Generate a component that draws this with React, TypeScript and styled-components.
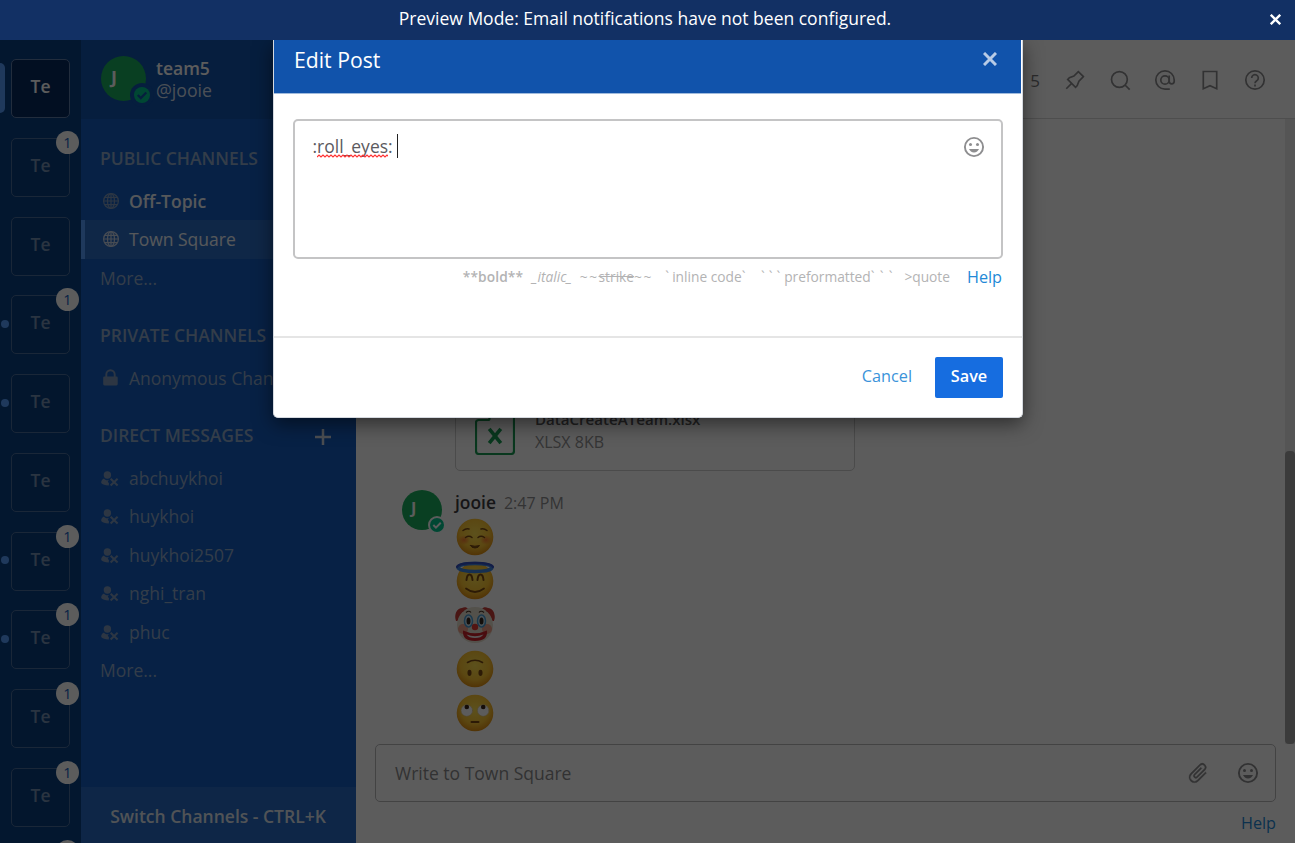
import React from "react";
import styled, { createGlobalStyle } from "styled-components";

const GlobalStyle = createGlobalStyle`
  * { box-sizing: border-box; }
  body { margin: 0; font-family: "Open Sans", sans-serif; font-size: 17.5px; overflow: hidden; }
`;

const Page = styled.div`
  position: relative;
  display: flex;
  flex-direction: column;
  width: 1295px;
  height: 843px;
  overflow: hidden;
  background: #fff;
`;
const Banner = styled.div`
  position: relative;
  z-index: 3;
  height: 40px;
  flex: none;
  display: flex;
  align-items: center;
  padding-bottom: 2px;
  background: #123064;
  color: #fff;
  font-size: 17.5px;
  line-height: 38px;
`;
const BannerText = styled.span`
  flex: 1;
  text-align: center;
  padding: 0 0 3px 35px;
`;
const BannerClose = styled.span`
  width: 40px;
  display: flex;
  justify-content: center;
`;
const Body = styled.div`
  flex: 1;
  min-height: 0;
  display: flex;
`;

/* Team rail */
const Rail = styled.nav`
  width: 81px;
  flex: none;
  background: #0b4283;
  padding-top: 19px;
  overflow: hidden;
`;
const TeamSlot = styled.div`
  position: relative;
  height: 78.75px;
  padding-left: 11px;
`;
const TeamTile = styled.div<{ $active?: boolean }>`
  width: 59px;
  height: 59px;
  border: 1px solid ${(p) => (p.$active ? "#5f7ca8" : "#4a6c9b")};
  border-radius: 5px;
  background: ${(p) => (p.$active ? "#082a60" : "#0a3e7d")};
  color: ${(p) => (p.$active ? "#fff" : "#7590b3")};
  font-weight: 600;
  line-height: 53px;
  text-align: center;
`;
const TeamBadge = styled.span`
  position: absolute;
  left: 56px;
  top: -7px;
  width: 23px;
  height: 23px;
  border-radius: 50%;
  background: #fff;
  color: #145dbf;
  font-size: 14.5px;
  line-height: 23px;
  text-align: center;
`;
const TeamMarker = styled.span<{ $active?: boolean }>`
  position: absolute;
  left: ${(p) => (p.$active ? "-5px" : "1px")};
  top: ${(p) => (p.$active ? "4px" : "24.5px")};
  width: ${(p) => (p.$active ? "10px" : "8px")};
  height: ${(p) => (p.$active ? "50px" : "8px")};
  border-radius: 5px;
  background: #579eff;
`;

/* Channel sidebar */
const Sidebar = styled.aside`
  width: 275px;
  flex: none;
  display: flex;
  flex-direction: column;
  background: #145dbf;
  color: #8eaed9;
`;
const TeamHeader = styled.div`
  height: 79px;
  flex: none;
  display: flex;
  align-items: flex-start;
  gap: 10px;
  padding: 16px 20px 0;
  background: #1153ab;
  line-height: 22px;
`;
const TeamName = styled.div`
  color: #fff;
  font-weight: 600;
  padding-top: 1px;
`;
const UserName = styled.div`
  color: #d0dded;
  font-size: 17.7px;
`;
const Avatar = styled.div<{ $size: number }>`
  position: relative;
  flex: none;
  width: ${(p) => p.$size}px;
  height: ${(p) => p.$size}px;
  border-radius: 50%;
  background: #1aaf5e;
  color: #fff;
  font-weight: 700;
  font-size: ${(p) => (p.$size > 42 ? 18 : 16)}px;
  line-height: ${(p) => p.$size - 3}px;
  padding-left: ${(p) => (p.$size > 42 ? 10 : 9)}px;
`;
const StatusBadge = styled.span<{ $ring: string; $size: number; $right: number; $bottom: number }>`
  position: absolute;
  right: ${(p) => p.$right}px;
  bottom: ${(p) => p.$bottom}px;
  width: ${(p) => p.$size}px;
  height: ${(p) => p.$size}px;
  border-radius: 50%;
  background: ${(p) => p.$ring};
  display: flex;
  align-items: center;
  justify-content: center;
`;
const Section = styled.div<{ $gap: number }>`
  display: flex;
  justify-content: space-between;
  align-items: center;
  height: 24px;
  flex: none;
  margin-top: ${(p) => p.$gap}px;
  margin-bottom: 12px;
  padding: 0 24px 0 19px;
  font-weight: 600;
  white-space: nowrap;
  color: #8fa8ca;
  svg { position: relative; top: 1px; }
`;
const Channel = styled.div<{ $active?: boolean; $strong?: boolean }>`
  height: 38.5px;
  flex: none;
  display: flex;
  align-items: center;
  gap: 10px;
  padding-left: ${(p) => (p.$active ? "15px" : "19px")};
  border-left: ${(p) => (p.$active ? "4px solid #579eff" : "0")};
  background: ${(p) => (p.$active ? "#2c6dc4" : "transparent")};
  color: ${(p) => (p.$active || p.$strong ? "#eef3fa" : "#8fa8ca")};
  font-weight: ${(p) => (p.$strong ? 600 : 400)};
  white-space: nowrap;
  overflow: hidden;
  svg { color: ${(p) => (p.$active ? "#c5d2e6" : "#7d97bb")}; flex: none; }
`;
const Switcher = styled.div`
  margin-top: auto;
  height: 56px;
  padding-right: 1px;
  background: #276ac4;
  color: #dfe6ef;
  font-weight: 600;
  line-height: 58px;
  text-align: center;
`;

/* Center */
const Center = styled.main`
  flex: 1;
  min-width: 0;
  display: flex;
  flex-direction: column;
  color: #3d3c40;
`;
const ChannelHeader = styled.header`
  height: 79px;
  flex: none;
  display: flex;
  justify-content: flex-end;
  align-items: center;
  gap: 21px;
  padding: 2px 28px 0 0;
  border-bottom: 1px solid #d8d8d8;
  color: #8b8b8d;
`;
const MemberCount = styled.span`
  font-size: 17px;
  margin-right: 2px;
  color: #77777a;
`;
const Scroller = styled.section`
  flex: 1;
  min-height: 0;
  display: flex;
`;
const Posts = styled.div`
  flex: 1;
  display: flex;
  flex-direction: column;
  justify-content: flex-end;
  padding: 0 0 9px 46px;
`;
const Track = styled.div`
  width: 10px;
  background: #ebebeb;
  display: flex;
  align-items: flex-end;
`;
const Thumb = styled.div`
  width: 10px;
  height: 293px;
  border-radius: 4px;
  background: #a5a5a5;
`;
const FileCard = styled.div`
  display: flex;
  align-items: center;
  gap: 20px;
  width: 400px;
  height: 84px;
  margin-left: 53px;
  padding: 2px 0 0 19px;
  border: 1px solid #cfcfcf;
  border-radius: 5px;
`;
const FileName = styled.div`
  font-size: 15.1px;
  font-weight: 600;
  line-height: 23px;
  color: #5d5c60;
`;
const FileMeta = styled.div`
  font-size: 16px;
  line-height: 22px;
  color: #929294;
`;
const Post = styled.article`
  display: flex;
  gap: 13px;
  margin-top: 19px;
`;
const PostMeta = styled.div`
  display: flex;
  gap: 8px;
  height: 25px;
  line-height: 25px;
  font-size: 17.4px;
`;
const Author = styled.b`
  font-weight: 600;
`;
const Time = styled.span`
  font-size: 16px;
  line-height: 26px;
  color: #8f8f91;
`;
const EmojiRow = styled.div`
  height: 44px;
  display: flex;
  align-items: center;
`;
const Composer = styled.div`
  height: 58px;
  flex: none;
  display: flex;
  align-items: center;
  margin: 0 19px;
  padding: 0 15px 0 19px;
  border: 1px solid #b9b9bb;
  border-radius: 5px;
  color: #8b8b8d;
`;
const Placeholder = styled.span`
  flex: 1;
`;
const ComposerIcons = styled.div`
  display: flex;
  gap: 26px;
  align-items: center;
`;
const ComposerFooter = styled.div`
  height: 41px;
  flex: none;
  padding-right: 19px;
  text-align: right;
  line-height: 42px;
  font-size: 16.2px;
  color: #2389d7;
`;

/* Modal */
const Backdrop = styled.div`
  position: absolute;
  inset: 0;
  z-index: 1;
  background: rgba(0, 0, 0, 0.64);
`;
const Modal = styled.div`
  position: absolute;
  z-index: 2;
  left: 273px;
  top: 40px;
  width: 750px;
  height: 377.5px;
  display: flex;
  flex-direction: column;
  background: #fff;
  border: 1px solid #d5d9df;
  border-top: 0;
  border-radius: 0 0 5px 5px;
  box-shadow: 0 6px 19px rgba(0, 0, 0, 0.5);
  overflow: hidden;
`;
const ModalHeader = styled.div`
  height: 54px;
  flex: none;
  display: flex;
  justify-content: space-between;
  margin-right: 1px;
  padding: 0 24px 0 20px;
  background: #1153ab;
  border-bottom: 1px solid #a0bbdd;
  color: #fff;
  font-size: 21.2px;
  line-height: 39px;
  svg { margin-top: 12px; }
`;
const ModalBody = styled.div`
  flex: 1;
  padding: 24.5px 19px 0;
`;
const EditBox = styled.div`
  height: 140px;
  display: flex;
  justify-content: space-between;
  align-items: flex-start;
  padding: 13.5px 15px 0 17.5px;
  border: 2px solid #c4c4c5;
  border-radius: 5px;
  line-height: 24px;
  color: #5b5a5e;
  > svg { color: #8e8e90; margin-top: 1px; }
`;
const Draft = styled.div`
  display: flex;
  font-size: 17.5px;
`;
const Misspelt = styled.span`
  position: relative;
`;
const Squiggle = styled.svg`
  position: absolute;
  left: 0;
  bottom: 0;
`;
const Caret = styled.i`
  width: 1px;
  height: 24px;
  margin-left: 4.5px;
  background: #222;
`;
const Hints = styled.div`
  display: flex;
  justify-content: flex-end;
  align-items: center;
  height: 36px;
  padding-right: 1px;
  font-size: 13.75px;
  color: #b3b3b4;
  white-space: pre;
`;
const Hint = styled.span<{ $gap: number }>`
  margin-right: ${(p) => p.$gap}px;
  b { font-weight: 600; letter-spacing: 0.1px; }
`;
const Marks = styled.span<{ $space: number }>`
  letter-spacing: ${(p) => p.$space}px;
`;
const HelpLink = styled.a`
  font-size: 16.2px;
  color: #2389d7;
`;
const ModalFooter = styled.div`
  height: 81px;
  flex: none;
  display: flex;
  justify-content: flex-end;
  align-items: flex-start;
  gap: 23px;
  padding: 19px 19px 0;
  border-top: 2px solid #e5e5e5;
  font-size: 16.25px;
  line-height: 39px;
`;
const Cancel = styled.span`
  color: #3a93da;
`;
const Save = styled.button`
  width: 68px;
  height: 41px;
  padding: 0 0 2px;
  border: 0;
  border-radius: 2px;
  background: #166de0;
  color: #fff;
  font: 600 16.25px/39px "Open Sans", sans-serif;
`;

const Icon = ({ size = 24, children }: { size?: number; children: React.ReactNode }) => (
  <svg width={size} height={size} viewBox="0 0 24 24" fill="none" stroke="currentColor" strokeWidth={1.7}>
    {children}
  </svg>
);
const Close = ({ size, color }: { size: number; color: string }) => (
  <svg width={size} height={size} viewBox="0 0 14 14" stroke={color} strokeWidth="3">
    <path d="M1 1l12 12M13 1L1 13" />
  </svg>
);
const Smiley = () => (
  <Icon>
    <circle cx="12" cy="12" r="9.1" strokeWidth="1.9" />
    <g fill="currentColor" stroke="none">
      <circle cx="8.5" cy="9.6" r="1.5" />
      <circle cx="15.5" cy="9.6" r="1.5" />
      <path d="M7 14h10c-.8 2-2.7 3.4-5 3.4S7.8 16 7 14z" />
    </g>
  </Icon>
);
const Globe = () => (
  <svg width="19" height="18" viewBox="-11 -9 19 18" fill="none" stroke="currentColor" strokeWidth="1.2">
    <circle r="7.4" />
    <ellipse rx="3.5" ry="7.4" />
    <path d="M0-7.4V7.4M-7.4 0H7.4M-6.5-3.7H6.5M-6.5 3.7H6.5" />
  </svg>
);
const Lock = () => (
  <svg width="19" height="18" viewBox="0 0 19 18" fill="currentColor">
    <rect x="3.2" y="7.4" width="14.5" height="9" rx="1.3" />
    <path d="M6.3 8V5.4a4.2 4.2 0 0 1 8.4 0V8" fill="none" stroke="currentColor" strokeWidth="1.9" />
  </svg>
);
const UserX = () => (
  <svg width="19" height="18" viewBox="0 0 19 18" fill="currentColor">
    <circle cx="7.4" cy="6" r="3.7" />
    <path d="M4 9.5C2 10.2 1.2 11.7 1.2 14 2.5 15.5 5 16.5 8.7 16.5L9 14.4 7.7 12.6 9 11C6.8 11.7 5 11.2 4 9.5z" />
    <path d="M10.6 9.8l7 6.6M17.6 9.8l-7 6.6" stroke="currentColor" strokeWidth="2" />
  </svg>
);
const StatusCheck = ({ size, tick }: { size: number; tick: string }) => (
  <svg width={size} height={size} viewBox="0 0 16 16">
    <circle cx="8" cy="8" r="8" fill="#00c58f" />
    <path d="M3.8 8l3 3 5.5-5.5" fill="none" stroke={tick} strokeWidth="2.3" />
  </svg>
);

const brown = "#7a4a12";
const Face = ({ children, flip }: { children: React.ReactNode; flip?: boolean }) => (
  <svg width="40" height="42" viewBox="-20 -21 40 42" overflow="visible">
    <defs>
      <radialGradient id="skin" cx="50%" cy="40%" r="60%">
        <stop offset="0" stopColor="#ffe04f" />
        <stop offset=".65" stopColor="#fcc533" />
        <stop offset="1" stopColor="#e08f13" />
      </radialGradient>
      <radialGradient id="blush">
        <stop offset="0" stopColor="#f4642c" stopOpacity=".75" />
        <stop offset="1" stopColor="#f4642c" stopOpacity="0" />
      </radialGradient>
    </defs>
    <circle r="18.3" fill="url(#skin)" />
    <g transform={flip ? "rotate(180)" : undefined} fill="none" stroke={brown} strokeWidth="1.5" strokeLinecap="round">
      {children}
    </g>
  </svg>
);
const Relaxed = () => (
  <Face>
    <ellipse cx="-11" cy="3" rx="6" ry="5" fill="url(#blush)" stroke="none" />
    <ellipse cx="11" cy="3" rx="6" ry="5" fill="url(#blush)" stroke="none" />
    <path d="M-12-6.5q3-2.5 6-1.5M12-6.5q-3-2.5-6-1.5M-9.5.5q3.5-2.5 6.5 0M9.5.5q-3.5-2.5-6.5 0" />
    <path d="M-4.5 8.5q4.5 1.5 9 0Q3.5 11 0 11T-4.5 8.5z" fill={brown} strokeWidth="1" />
  </Face>
);
const Angel = () => (
  <Face>
    <path d="M-8.5-1q.5-5.5 3-5.5T-2.5-1M8.5-1q-.5-5.5-3-5.5T2.5-1" strokeWidth="2" />
    <path d="M-9 7.5q9 7 18 0" strokeWidth="1.8" />
    <ellipse cy="-13.5" rx="17" ry="4" stroke="#3f86df" strokeWidth="3.4" />
    <path d="M-18-14C-16-19.5 16-19.5 18-14" stroke="#3450c4" strokeWidth="2.2" />
  </Face>
);
const Clown = () => (
  <svg width="40" height="42" viewBox="-20 -21 40 42">
    <path d="M-19-5c-2-6 1-12 6-12 2-1 5-1 6 1l-7 11zM19-5c2-6-1-12-6-12-2-1-5-1-6 1l7 11z" fill="#c93d38" />
    <ellipse cy="0" rx="18" ry="18" fill="#e6dfcf" />
    <path d="M-19-4c-1.5-6 1-11 6-12l2 2c-4 2-6 5-6.5 10zM19-4c1.5-6-1-11-6-12l-2 2c4 2 6 5 6.5 10z" fill="#c93d38" />
    <circle cx="-12" cy="4" r="5" fill="#f0a08a" />
    <circle cx="12" cy="4" r="5" fill="#f0a08a" />
    <g fill="#cfe6f2" stroke="#4d9ed4" strokeWidth="1.5">
      <ellipse cx="-6.5" cy="-4" rx="4" ry="6" />
      <ellipse cx="6.5" cy="-4" rx="4" ry="6" />
    </g>
    <ellipse cx="-6.5" cy="-4" rx="2" ry="3.6" fill="#36271f" />
    <ellipse cx="6.5" cy="-4" rx="2" ry="3.6" fill="#36271f" />
    <path d="M-9-12.5q3-2.5 5 0M9-12.5q-3-2.5-5 0" fill="none" stroke="#4a3526" strokeWidth="1.2" />
    <path d="M-12 5.5Q0 11 12 5.5q1 10.5-12 10.5T-12 5.5z" fill="#cc222a" />
    <path d="M-8.5 9.5q8.5 3.5 17 0-2.5 3.5-8.5 3.5t-8.5-3.5z" fill="#f3eeee" />
    <circle cy="2" r="3.2" fill="#e33a35" />
  </svg>
);
const UpsideDown = () => (
  <Face flip>
    <ellipse cx="-5.5" cy="-3.8" rx="1.3" ry="2.4" fill={brown} />
    <ellipse cx="5.5" cy="-3.8" rx="1.3" ry="2.4" fill={brown} />
    <path d="M-7.5 6.5q7.5 4.5 15 0" strokeWidth="1.6" />
  </Face>
);
const RollEyes = () => (
  <Face>
    <circle cx="-8.2" cy="-2.5" r="5.8" fill="#fff" stroke="#dcc28a" strokeWidth=".6" />
    <circle cx="8.2" cy="-2.5" r="5.8" fill="#fff" stroke="#dcc28a" strokeWidth=".6" />
    <circle cx="-8.2" cy="-6" r="2.3" fill="#3a2618" stroke="none" />
    <circle cx="8.2" cy="-6" r="2.3" fill="#3a2618" stroke="none" />
    <path d="M-3.5 9h7" strokeWidth="2" />
  </Face>
);

type Team = { initials: string; active?: boolean; badge?: boolean; dot?: boolean };
const teams: Team[] = [
  { initials: "Te", active: true },
  { initials: "Te", badge: true },
  { initials: "Te" },
  { initials: "Te", badge: true, dot: true },
  { initials: "Te", dot: true },
  { initials: "Te" },
  { initials: "Te", badge: true, dot: true },
  { initials: "Te", badge: true, dot: true },
  { initials: "Te", badge: true },
  { initials: "Te", badge: true },
  { initials: "", badge: true },
];

const directs = ["abchuykhoi", "huykhoi", "huykhoi2507", "nghi_tran", "phuc"];

export default function App() {
  return (
    <Page>
      <GlobalStyle />
      <Banner>
        <BannerText>Preview Mode: Email notifications have not been configured.</BannerText>
        <BannerClose><Close size={11} color="#fff" /></BannerClose>
      </Banner>
      <Body>
        <Rail>
          {teams.map((t, i) => (
            <TeamSlot key={i}>
              {(t.active || t.dot) && <TeamMarker $active={t.active} />}
              <TeamTile $active={t.active}>{t.initials}</TeamTile>
              {t.badge && <TeamBadge>{t.initials && "1"}</TeamBadge>}
            </TeamSlot>
          ))}
        </Rail>
        <Sidebar>
          <TeamHeader>
            <Avatar $size={45}>
              J
              <StatusBadge $ring="#1153ab" $size={24} $right={-8} $bottom={-6}><StatusCheck size={16} tick="#1153ab" /></StatusBadge>
            </Avatar>
            <div>
              <TeamName>team5</TeamName>
              <UserName>@jooie</UserName>
            </div>
          </TeamHeader>
          <Section $gap={26.5}>PUBLIC CHANNELS</Section>
          <Channel $strong><Globe />Off-Topic</Channel>
          <Channel $active><Globe />Town Square</Channel>
          <Channel>More...</Channel>
          <Section $gap={25.5}>PRIVATE CHANNELS</Section>
          <Channel><Lock />Anonymous Channel</Channel>
          <Section $gap={25.5}>
            DIRECT MESSAGES
            <svg width="18" height="18" viewBox="0 0 18 18" stroke="#d0d8e2" strokeWidth="2.5"><path d="M9 2v16M1 10h16" /></svg>
          </Section>
          {directs.map((name) => (
            <Channel key={name}><UserX />{name}</Channel>
          ))}
          <Channel>More...</Channel>
          <Switcher>Switch Channels - CTRL+K</Switcher>
        </Sidebar>
        <Center>
          <ChannelHeader>
            <MemberCount>5</MemberCount>
            <Icon>
              <g transform="translate(12 12) scale(1.12) translate(-12 -12)" strokeWidth="1.5">
                <path d="M15 4.5l-4 4-4 1.5-1.5 1.5 7 7 1.5-1.5 1.5-4 4-4M9 15l-4.8 4.8M14.5 4l5.5 5.5" />
              </g>
            </Icon>
            <Icon><circle cx="11.4" cy="11.5" r="7.9" /><path d="M17 17l4.7 4.7" /></Icon>
            <Icon>
              <circle cx="12" cy="12" r="4.2" />
              <path d="M16.2 7.5v5.8a2.5 2.5 0 0 0 5 0V12A9.2 9.2 0 1 0 12 21.2h4.8" />
            </Icon>
            <Icon><path d="M5.3 3.5h13.4v17.2L12 17.8l-6.7 2.9z" /></Icon>
            <Icon>
              <circle cx="12" cy="12" r="9.2" />
              <path d="M8.7 10a3.3 3.3 0 1 1 5.2 2.6c-1.1.8-1.9 1.3-1.9 2.6M12 16.5v2" />
            </Icon>
          </ChannelHeader>
          <Scroller>
            <Posts>
              <FileCard>
                <svg width="40" height="50" viewBox="0 0 40 50" fill="none" stroke="#1b9c55" strokeWidth="2.2">
                  <path d="M14.5 1.2H36a3 3 0 0 1 3 3V46a3 3 0 0 1-3 3H4a3 3 0 0 1-3-3V17.5a2.5 2.5 0 0 1 2.5-2.5H13a1.5 1.5 0 0 0 1.5-1.5V1.2" />
                  <path d="M14.2 23.8l11.6 14.4M25.8 23.8L14.2 38.2" strokeWidth="3.6" />
                </svg>
                <div>
                  <FileName>DataCreateATeam.xlsx</FileName>
                  <FileMeta>XLSX 8KB</FileMeta>
                </div>
              </FileCard>
              <Post>
                <Avatar $size={40}>
                  J
                  <StatusBadge $ring="#fff" $size={18} $right={-4} $bottom={-4}><StatusCheck size={14} tick="#fff" /></StatusBadge>
                </Avatar>
                <div>
                  <PostMeta><Author>jooie</Author><Time>2:47 PM</Time></PostMeta>
                  <EmojiRow><Relaxed /></EmojiRow>
                  <EmojiRow><Angel /></EmojiRow>
                  <EmojiRow><Clown /></EmojiRow>
                  <EmojiRow><UpsideDown /></EmojiRow>
                  <EmojiRow><RollEyes /></EmojiRow>
                </div>
              </Post>
            </Posts>
            <Track><Thumb /></Track>
          </Scroller>
          <Composer>
            <Placeholder>Write to Town Square</Placeholder>
            <ComposerIcons>
              <svg width="24" height="24" viewBox="0 0 24 24" fill="currentColor" stroke="currentColor" strokeWidth=".3">
                <path transform="rotate(45 12 12)" d="M16.5 6V17.5A4 4 0 0 1 8.5 17.5V5A2.5 2.5 0 0 1 13.5 5V15.5A1 1 0 0 1 11.5 15.5V6H10V15.5A2.5 2.5 0 0 0 15 15.5V5A4 4 0 0 0 7 5V17.5A5.5 5.5 0 0 0 18 17.5V6z" />
              </svg>
              <Smiley />
            </ComposerIcons>
          </Composer>
          <ComposerFooter>Help</ComposerFooter>
        </Center>
      </Body>
      <Backdrop />
      <Modal>
        <ModalHeader>
          Edit Post
          <Close size={14} color="#b8cbe6" />
        </ModalHeader>
        <ModalBody>
          <EditBox>
            <Draft>
              :
              <Misspelt>
                roll_eyes
                <Squiggle width="71" height="4" viewBox="0 0 71 4" fill="none" stroke="#f33" strokeWidth="1.2">
                  <path d={"M0 3" + "l2-2l2 2".repeat(18)} />
                </Squiggle>
              </Misspelt>
              :
              <Caret />
            </Draft>
            <Smiley />
          </EditBox>
          <Hints>
            <Hint $gap={9}><b>**bold**</b></Hint>
            <Hint $gap={8}><i>_italic_</i></Hint>
            <Hint $gap={12.5}><Marks $space={1.5}>~~</Marks><s>strike</s><Marks $space={1.5}>~~</Marks></Hint>
            <Hint $gap={11}><Marks $space={3}>`</Marks>inline code<Marks $space={4.5}>`</Marks></Hint>
            <Hint $gap={6.6}><Marks $space={3.9}>```</Marks>preformatted<Marks $space={5.2}>```</Marks></Hint>
            <Hint $gap={17}>&gt;quote</Hint>
            <HelpLink>Help</HelpLink>
          </Hints>
        </ModalBody>
        <ModalFooter>
          <Cancel>Cancel</Cancel>
          <Save>Save</Save>
        </ModalFooter>
      </Modal>
    </Page>
  );
}
